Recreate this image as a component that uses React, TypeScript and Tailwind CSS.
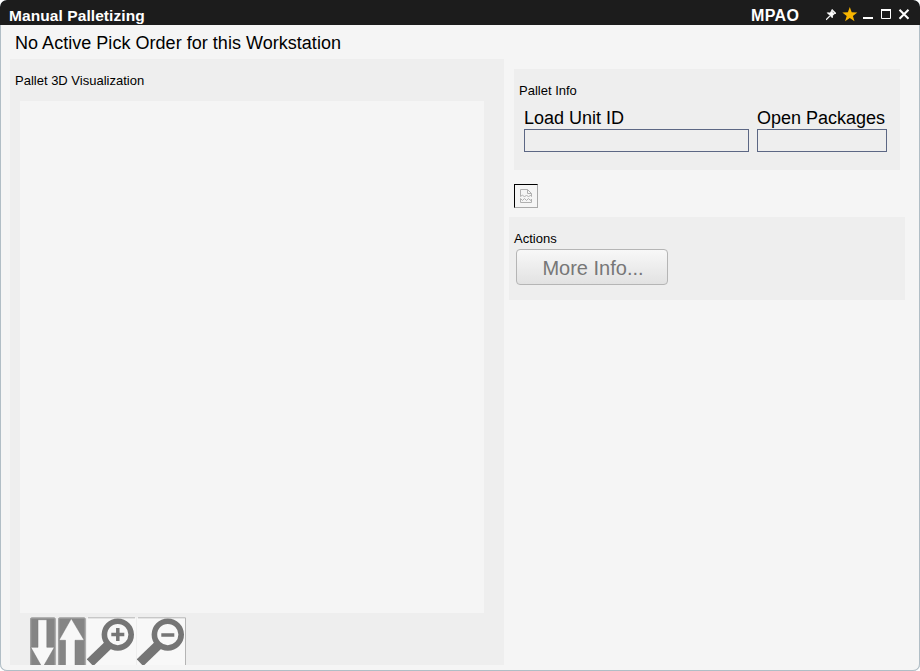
import React from 'react';

function TitleBar() {
  return (
    <header className="flex h-[25px] shrink-0 items-start rounded-t-[6px] bg-[#1c1c1c] pl-[9px] pr-[8px] text-[15.5px] font-bold leading-[17px] text-white">
      <h1 className="mt-[7px] whitespace-nowrap tracking-[0.08px]">Manual Palletizing</h1>
      <span className="ml-auto mt-[7px] w-[75px] whitespace-nowrap text-[16px] tracking-[0.4px]">MPAO</span>
      <svg width="86" height="24" viewBox="826 0 86 24" fill="none" stroke="#fff">
        <path d="M826 19.8L829.7 16.1" strokeWidth="1.3" />
        <path d="M827.3 12.8L832.3 17.8L832.6 15.7L834 13.9L836 13.3L832 9.4L831.3 11.5L829.6 12.9Z" fill="#fff" strokeWidth=".8" />
        <path d="M832.5 12L834 13.2" stroke="#777" strokeWidth=".9" />
        <path d="M849.8 7L851.7 12.3L857.3 12.5L852.9 15.9L854.5 21.3L849.8 18.1L845.1 21.3L846.7 15.9L842.3 12.5L847.9 12.3Z" fill="#f7b500" stroke="none" />
        <path d="M863 18H873" strokeWidth="2" />
        <path d="M881.5 10.5H890.5V18.5H881.5Z" strokeWidth="1" />
        <path d="M881 10H891" strokeWidth="2" />
        <path d="M899.5 9.7L908.5 18.7M908.5 9.7L899.5 18.7" strokeWidth="2.1" />
      </svg>
    </header>
  );
}

function ArrowIcon({ up = false }: { up?: boolean }) {
  return (
    <svg width={up ? 28 : 26} height="48" viewBox={up ? '0 0 28 48' : '0 0 26 48'}>
      <rect x=".3" y=".5" width={up ? 27.2 : 25.2} height="52" rx="1.5" fill="#858585" />
      <path d={up ? 'M.8 50V1.2H27V50' : 'M.8 50V1.2H25V50'} fill="none" stroke="#a0a0a0" />
      <path
        d={up ? 'M13.3 1.6L26.2 23.3H17V52H7.5V23.3H1Z' : 'M8 2.7H16.8V30.3H24.4L12.5 51L.8 30.3H8Z'}
        fill="#f8f8f8"
        stroke="#747474"
        strokeWidth=".5"
      />
    </svg>
  );
}

function ZoomIcon({ plus = false }: { plus?: boolean }) {
  return (
    <svg width="49" height="48" viewBox="0 0 49 48">
      <rect x="0" y=".5" width="49" height="52" rx="1" fill="#f8f8f8" />
      <path d={plus ? 'M1 .8H48' : 'M1 .8H48.5V48'} fill="none" stroke="#b4b4b4" />
      <path d="M22 27.3L3 45.7" stroke="#757575" strokeWidth="9.4" />
      <circle cx="30.8" cy="17.6" r="13.4" fill="#f8f8f8" stroke="#757575" strokeWidth="5.6" />
      <path d={plus ? 'M24.3 17.6H37.3M30.8 11.1V24.1' : 'M24.3 18H37.3'} stroke="#757575" strokeWidth="3.5" />
    </svg>
  );
}

function Field({ label, className }: { label: string; className: string }) {
  return (
    <label className={className}>
      <span className="block h-[21px] whitespace-nowrap text-[18px] leading-[20px]">{label}</span>
      <input readOnly className="block h-[23px] w-full border border-[#5c6784] bg-[#eeeeee] outline-none" />
    </label>
  );
}

export default function App() {
  return (
    <div className="h-[671px] w-[920px] bg-white font-['Liberation_Sans',Arial,sans-serif] text-black">
      <div className="flex h-full flex-col overflow-hidden rounded-[7px] bg-[#f5f5f5] shadow-[inset_1px_0_#b1bec6,inset_-1px_0_#b1bec6,inset_0_-1px_#b1bec6]">
        <TitleBar />
        <p className="h-[34px] shrink-0 whitespace-nowrap pl-[15px] pt-[8px] text-[18px] leading-[20px] tracking-[0.03px]">
          No Active Pick Order for this Workstation
        </p>
        <main className="flex items-start">
          <section className="ml-[10px] flex h-[606px] w-[494px] shrink-0 flex-col overflow-hidden bg-[#eeeeee]">
            <h2 className="h-[42px] shrink-0 pl-[5px] pt-[14px] text-[13px] leading-[15px]">Pallet 3D Visualization</h2>
            <div className="ml-[10px] h-[512px] w-[464px] shrink-0 bg-[#f5f5f5]" />
            <div className="flex pl-[20px] pt-[4px]">
              <ArrowIcon />
              <div className="ml-[2px]"><ArrowIcon up /></div>
              <div className="ml-px"><ZoomIcon plus /></div>
              <div className="ml-px"><ZoomIcon /></div>
            </div>
          </section>
          <div className="ml-[5px] flex flex-col">
            <section className="ml-[5px] mt-[10px] h-[101px] w-[386px] bg-[#eeeeee] pl-[5px] pt-[14px]">
              <h2 className="text-[13px] leading-[15px]">Pallet Info</h2>
              <div className="flex gap-[8px] pl-[5px] pt-[10px]">
                <Field label="Load Unit ID" className="w-[225px]" />
                <Field label="Open Packages" className="w-[130px]" />
              </div>
            </section>
            <div className="ml-[5px] mt-[14px] flex h-[24px] w-[24px] items-center justify-center border border-b-[#a9a9a9] border-l-black border-r-[#a9a9a9] border-t-black">
              <svg width="14" height="16" viewBox="0 0 14 16" fill="none" stroke="#b0b0b0">
                <path d="M1.5 8.5V1.5H8.5L12.5 5.5V8.5M8.5 1.5V5.5H12.5M1.5 8.5L3.5 7L5.5 9L7.5 7L9.5 9L11.5 7L12.5 8.5M1.5 14.5V10.5L3.5 12.5L5.5 10.5L7.5 12.5L9.5 10.5L11.5 12.5L12.5 11V14.5Z" />
              </svg>
            </div>
            <section className="mt-[9px] h-[83px] w-[396px] bg-[#eeeeee] pl-[5px] pt-[14px]">
              <h2 className="text-[13px] leading-[15px]">Actions</h2>
              <button className="ml-[2px] mt-[3px] block h-[36px] w-[152px] rounded-[4px] border border-[#b5b5b5] bg-linear-to-b from-[#f8f8f8] to-[#e2e2e2] pb-[1px] pl-[2px] pt-[2px] text-[20px] leading-[20px] text-[#777]">
                More Info...
              </button>
            </section>
          </div>
        </main>
      </div>
    </div>
  );
}
